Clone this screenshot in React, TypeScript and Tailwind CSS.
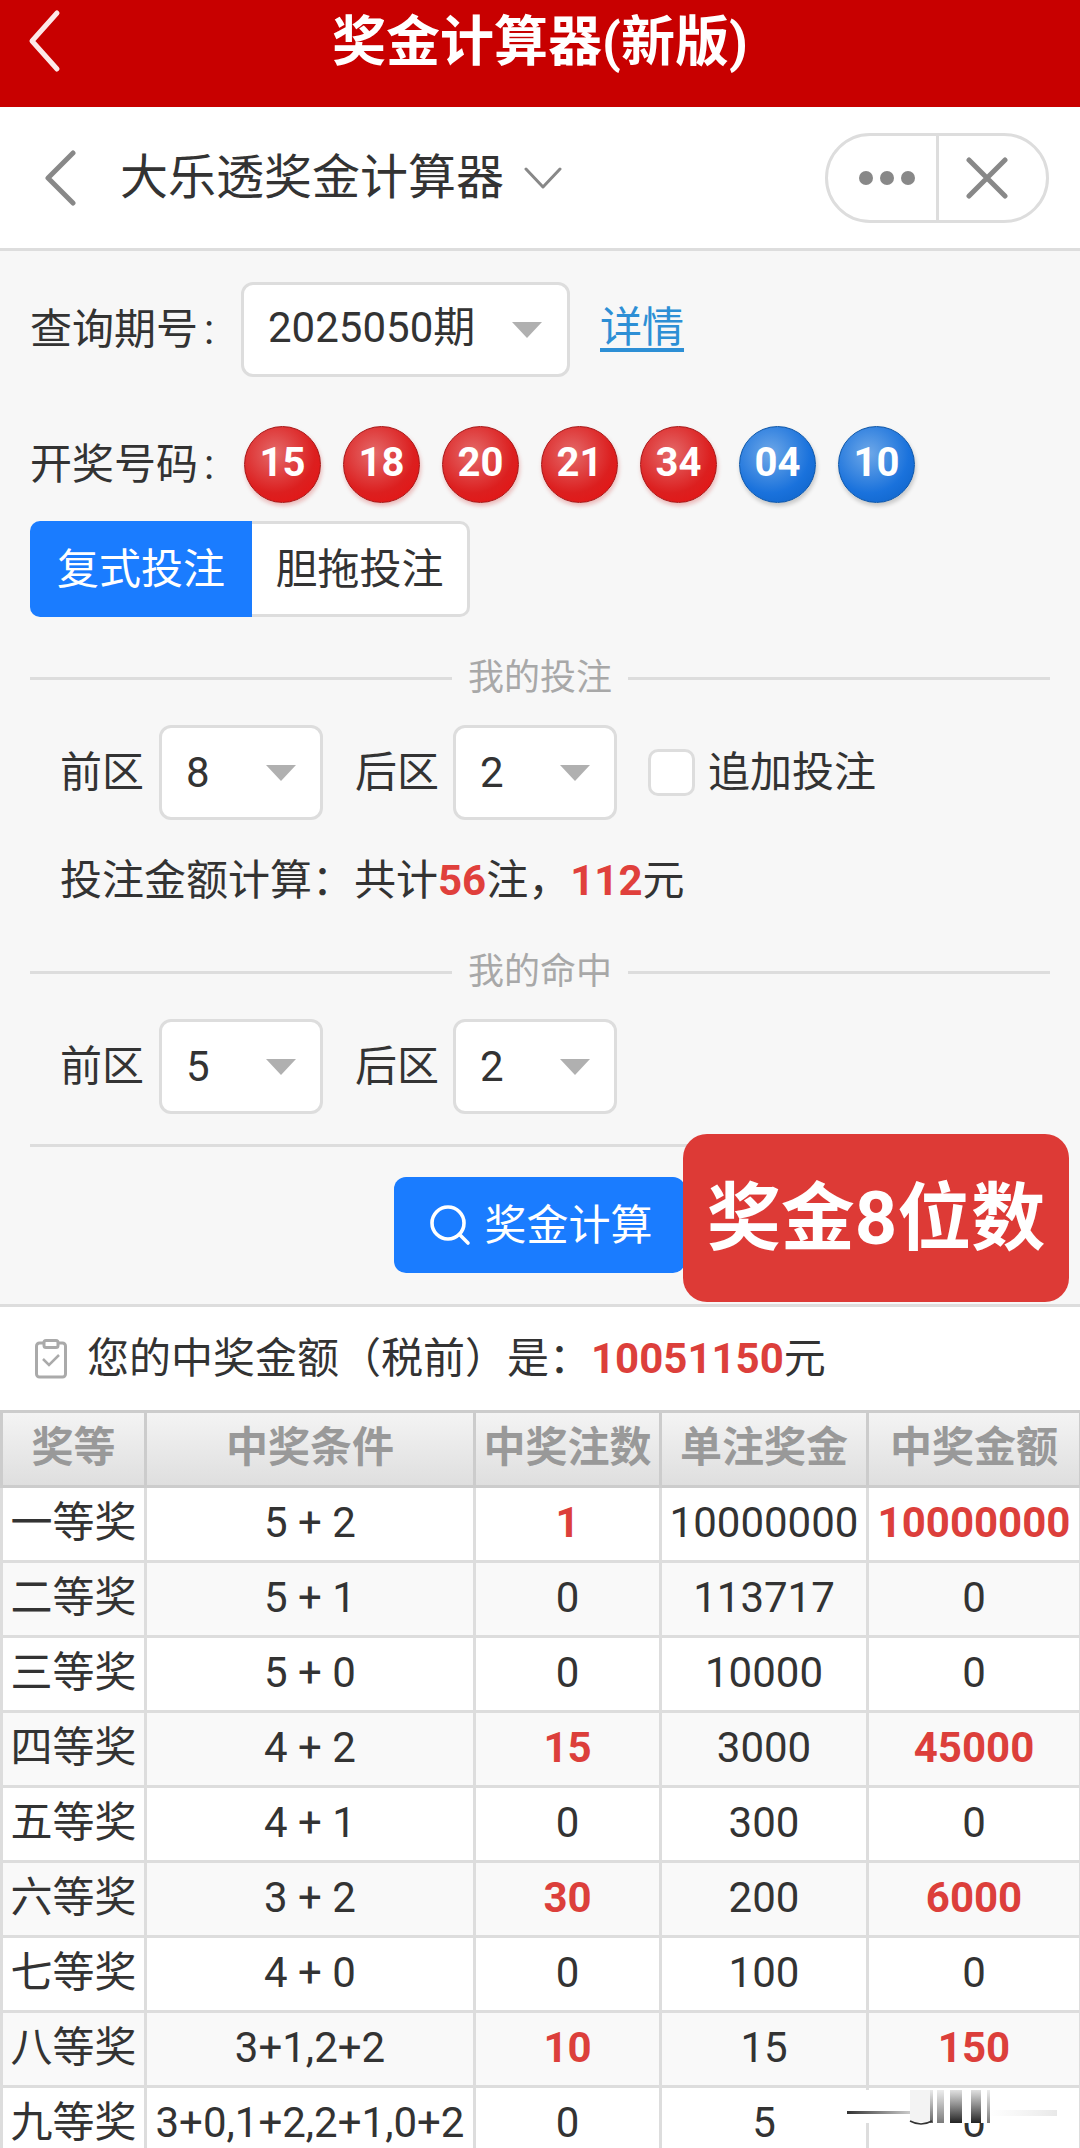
import { Search } from "lucide-react";

const balls = [
  { n: "15", blue: false },
  { n: "18", blue: false },
  { n: "20", blue: false },
  { n: "21", blue: false },
  { n: "34", blue: false },
  { n: "04", blue: true },
  { n: "10", blue: true },
];

const rows = [
  ["一等奖", "5 + 2", "1", "10000000", "10000000"],
  ["二等奖", "5 + 1", "0", "113717", "0"],
  ["三等奖", "5 + 0", "0", "10000", "0"],
  ["四等奖", "4 + 2", "15", "3000", "45000"],
  ["五等奖", "4 + 1", "0", "300", "0"],
  ["六等奖", "3 + 2", "30", "200", "6000"],
  ["七等奖", "4 + 0", "0", "100", "0"],
  ["八等奖", "3+1,2+2", "10", "15", "150"],
  ["九等奖", "3+0,1+2,2+1,0+2", "0", "5", "0"],
];

const Arrow = () => (
  <span className="h-0 w-0 border-x-[15px] border-t-[16px] border-x-transparent border-t-[#b0b0b0]" />
);

const Select = ({ value }: { value: string }) => (
  <div className="flex h-[95px] w-[164px] items-center justify-between rounded-[12px] border-[3px] border-[#ddd] bg-white pl-[24px] pr-[24px]">
    <span>{value}</span>
    <Arrow />
  </div>
);

const Divider = ({ label }: { label: string }) => (
  <div className="flex items-center gap-[16px] text-[36px] leading-none text-[#a8a8a8]">
    <div className="h-[3px] flex-1 bg-[#ddd]" />
    <span>{label}</span>
    <div className="h-[3px] flex-1 bg-[#ddd]" />
  </div>
);

// the blurred streak lying over the last table cell in the screenshot
const Smudge = () => (
  <svg className="absolute left-[847px] top-[2090px]" width="212" height="38" viewBox="0 0 212 38">
    <defs>
      <linearGradient id="bar" x1="0" y1="0" x2="0" y2="1">
        <stop offset="0" stopColor="#333" stopOpacity="0.15" />
        <stop offset="1" stopColor="#222" stopOpacity="1" />
      </linearGradient>
      <linearGradient id="streak" x1="0" y1="0" x2="1" y2="0">
        <stop offset="0" stopColor="#333" />
        <stop offset="1" stopColor="#333" stopOpacity="0" />
      </linearGradient>
      <linearGradient id="fade" x1="0" y1="0" x2="1" y2="0">
        <stop offset="0" stopColor="#eee" stopOpacity="0" />
        <stop offset="1" stopColor="#e8e8e8" />
      </linearGradient>
    </defs>
    <rect x="0" y="0" width="212" height="33" fill="#fff" />
    <rect x="0" y="21" width="85" height="3" fill="url(#streak)" />
    <rect x="140" y="20" width="70" height="6" fill="url(#fade)" />
    <rect x="63" y="0" width="20" height="32" fill="#f3f3f3" />
    <rect x="83" y="0" width="3" height="33" fill="url(#bar)" opacity="0.7" />
    <rect x="90" y="0" width="7" height="33" fill="url(#bar)" opacity="0.6" />
    <rect x="103" y="0" width="12" height="33" fill="url(#bar)" />
    <rect x="124" y="0" width="10" height="33" fill="url(#bar)" />
    <rect x="140" y="0" width="3" height="33" fill="url(#bar)" opacity="0.6" />
    <path d="M63 31 Q74 37 85 31" fill="none" stroke="#333" strokeWidth="1.5" />
  </svg>
);

export default function App() {
  return (
    <div className="relative h-[2148px] w-[1080px] overflow-hidden bg-white font-['Roboto','Noto_Sans_CJK_SC',sans-serif] text-[42px] text-[#333]">
      <header className="relative flex h-[107px] justify-center bg-[#c80000] pt-[6px] text-[54px] font-bold leading-[74px] text-white">
        <svg className="absolute left-[26px] top-[9px]" width="40" height="64" viewBox="0 0 40 64" fill="none">
          <path d="M31 4 L6 32 L31 60" stroke="#fde8e8" strokeWidth="5" strokeLinecap="round" strokeLinejoin="round" />
        </svg>
        奖金计算器(新版)
      </header>

      <div className="flex h-[144px] items-center border-b-[3px] border-[#ddd] pl-[43px] pr-[31px]">
        <svg width="34" height="56" viewBox="0 0 34 56" fill="none">
          <path d="M30 3 L5 28 L30 53" stroke="#888" strokeWidth="5" strokeLinecap="round" strokeLinejoin="round" />
        </svg>
        <span className="ml-[43px] text-[48px] leading-none">大乐透奖金计算器</span>
        <svg className="ml-[20px]" width="38" height="24" viewBox="0 0 38 24" fill="none">
          <path d="M2 3 L19 21 L36 3" stroke="#888" strokeWidth="3" strokeLinecap="round" strokeLinejoin="round" />
        </svg>
        <div className="ml-auto flex h-[90px] w-[224px] items-center rounded-full border-[3px] border-[#ddd]">
          <div className="flex h-full w-[111px] items-center justify-center gap-[7px] border-r-[3px] border-[#ddd] pl-[10px]">
            <span className="size-[14px] rounded-full bg-[#888]" />
            <span className="size-[14px] rounded-full bg-[#888]" />
            <span className="size-[14px] rounded-full bg-[#888]" />
          </div>
          <svg className="ml-[27px]" width="42" height="42" viewBox="0 0 42 42" fill="none">
            <path d="M3 3 L39 39 M39 3 L3 39" stroke="#888" strokeWidth="5" strokeLinecap="round" />
          </svg>
        </div>
      </div>

      <section className="h-[1056px] border-b-[3px] border-[#ddd] bg-[#f7f7f7] px-[30px]">
        <div className="flex items-center pt-[31px]">
          <span className="w-[211px]">
            查询期号<span className="ml-[6px]">:</span>
          </span>
          <div className="flex h-[95px] w-[329px] items-center justify-between rounded-[12px] border-[3px] border-[#ddd] bg-white pl-[24px] pr-[25px]">
            <span className="pb-[4px]">2025050期</span>
            <Arrow />
          </div>
          <a className="ml-[30px] pb-[4px] text-[#2d8fd5] underline underline-offset-[6px]">详情</a>
        </div>

        <div className="mt-[49px] flex h-[77px] items-center">
          <span className="w-[214px]">
            开奖号码<span className="ml-[6px]">:</span>
          </span>
          <div className="flex gap-[22px]">
            {balls.map((b) => (
              <span
                key={b.n}
                className={
                  b.blue
                    ? "flex size-[77px] items-center justify-center rounded-full border border-[#0b55a8] bg-[radial-gradient(circle_at_40%_35%,#6ea8e8,#1a72dc_60%,#0b5fc4)] pb-[4px] text-[40px] font-bold text-white shadow-[1px_3px_4px_rgba(0,0,0,0.2)]"
                    : "flex size-[77px] items-center justify-center rounded-full border border-[#a81414] bg-[radial-gradient(circle_at_40%_35%,#e46a6a,#dc1f1f_60%,#e81010)] pb-[4px] text-[40px] font-bold text-white shadow-[1px_3px_4px_rgba(200,0,0,0.25)]"
                }
              >
                {b.n}
              </span>
            ))}
          </div>
        </div>

        <div className="mt-[18px] flex h-[96px] w-[440px]">
          <div className="flex w-[222px] items-center justify-center rounded-l-[10px] bg-[#1a7cff] text-white">复式投注</div>
          <div className="flex flex-1 items-center justify-center rounded-r-[10px] border-y-[3px] border-r-[3px] border-[#ddd] bg-white">胆拖投注</div>
        </div>

        <div className="mt-[43px]">
          <Divider label="我的投注" />
        </div>

        <div className="mt-[29px] flex items-center pl-[30px]">
          <span className="mr-[15px]">前区</span>
          <Select value="8" />
          <span className="ml-[32px] mr-[14px]">后区</span>
          <Select value="2" />
          <span className="ml-[31px] size-[47px] rounded-[10px] border-[3px] border-[#ddd] bg-white" />
          <span className="ml-[13px]">追加投注</span>
        </div>

        <div className="mt-[32px] pl-[30px] leading-[58px]">
          投注金额计算：共计<b className="font-bold text-[#e0403c]">56</b>注，<b className="font-bold text-[#e0403c]">112</b>元
        </div>

        <div className="mt-[44px]">
          <Divider label="我的命中" />
        </div>

        <div className="mt-[29px] flex items-center pl-[30px]">
          <span className="mr-[15px]">前区</span>
          <Select value="5" />
          <span className="ml-[32px] mr-[14px]">后区</span>
          <Select value="2" />
        </div>

        <div className="mt-[30px] h-[3px] bg-[#ddd]" />

        <div className="mt-[30px] flex justify-end pr-[365px]">
          <button className="flex h-[96px] w-[291px] items-center justify-center gap-[10px] rounded-[12px] bg-[#1a7cff] text-white">
            <Search size={48} strokeWidth={1.8} />
            奖金计算
          </button>
        </div>
      </section>

      <div className="absolute left-[683px] top-[1134px] flex h-[168px] w-[386px] items-center justify-center rounded-[24px] bg-[#dd3a36] text-[74px] font-bold text-white">
        奖金8位数
      </div>

      <div className="flex h-[103px] items-center pl-[35px]">
        <svg width="32" height="40" viewBox="0 0 32 40" fill="none" stroke="#aaa" strokeWidth="3">
          <rect x="1.5" y="4" width="29" height="34" rx="3" />
          <rect x="9" y="1.5" width="14" height="7" rx="2" fill="#fff" />
          <path d="M8 20 L14 26 L24 16" strokeWidth="2.5" />
        </svg>
        <span className="ml-[20px]">
          您的中奖金额（税前）是：<b className="font-bold text-[#dc3f3b]">10051150</b>元
        </span>
      </div>

      <table className="w-[1079px] table-fixed border-collapse text-center">
        <colgroup>
          <col className="w-[144px]" />
          <col className="w-[329px]" />
          <col className="w-[186px]" />
          <col className="w-[207px]" />
          <col className="w-[213px]" />
        </colgroup>
        <thead>
          <tr className="h-[75px] bg-gradient-to-b from-[#f4f4f4] to-[#dedede] font-bold text-[#999]">
            {["奖等", "中奖条件", "中奖注数", "单注奖金", "中奖金额"].map((h) => (
              <th key={h} className="border-[3px] border-[#ccc] p-0 pb-[3px] font-bold">
                {h}
              </th>
            ))}
          </tr>
        </thead>
        <tbody>
          {rows.map((r, i) => (
            <tr key={r[0]} className={i % 2 === 1 ? "h-[75px] bg-[#f9f9f9]" : "h-[75px] bg-white"}>
              <td className="border-[3px] border-[#ddd] p-0 pb-[3px]">{r[0]}</td>
              <td className="border-[3px] border-[#ddd] p-0 pb-[3px]">{r[1]}</td>
              <td className={r[2] === "0" ? "border-[3px] border-[#ddd] p-0 pb-[3px]" : "border-[3px] border-[#ddd] p-0 pb-[3px] font-bold text-[#dc3f3b]"}>{r[2]}</td>
              <td className="border-[3px] border-[#ddd] p-0 pb-[3px]">{r[3]}</td>
              <td className={r[4] === "0" ? "border-[3px] border-[#ddd] p-0 pb-[3px]" : "border-[3px] border-[#ddd] p-0 pb-[3px] font-bold text-[#dc3f3b]"}>{r[4]}</td>
            </tr>
          ))}
        </tbody>
      </table>

      <Smudge />
    </div>
  );
}
